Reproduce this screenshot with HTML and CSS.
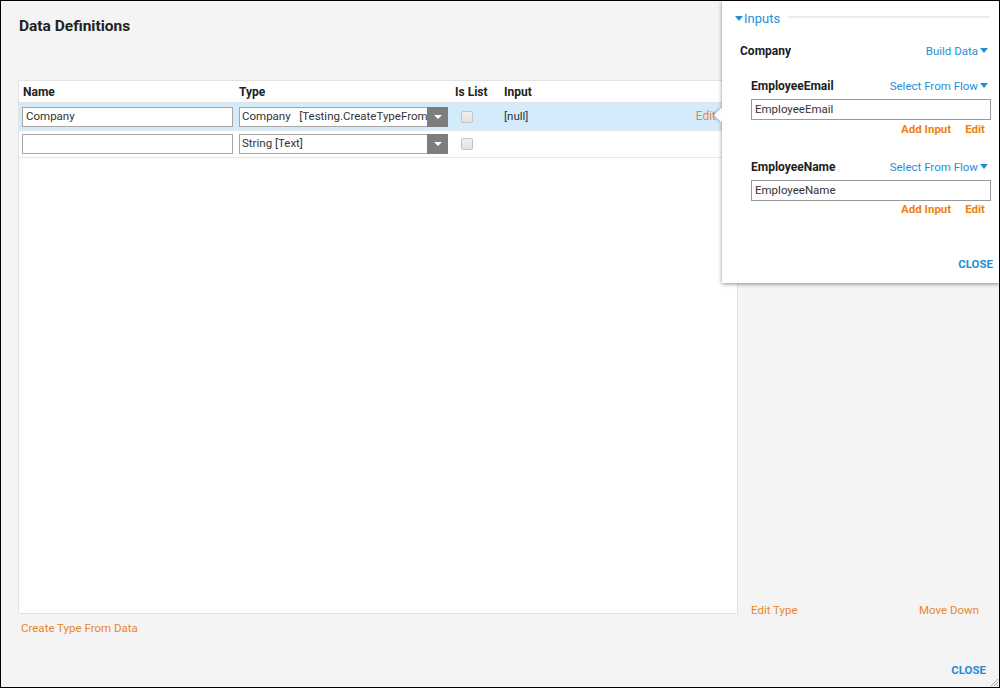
FILE: index.html
```html
<!DOCTYPE html>
<html>
<head>
<meta charset="utf-8">
<link rel="stylesheet" href="styles.css">
</head>
<body>
<div class="frame">
  <div class="content">
    <h1 class="title">Data Definitions</h1>
    <div class="main">
      <div class="table">
        <div class="row head">
          <div class="cell">Name</div>
          <div class="cell">Type</div>
          <div class="cell">Is List</div>
          <div class="cell">Input</div>
          <div class="cell"></div>
        </div>
        <div class="row sel">
          <div class="cell"><div class="tinput">Company</div></div>
          <div class="cell"><div class="select"><span class="sval">Company&nbsp;&nbsp;&nbsp;[Testing.CreateTypeFrom</span><span class="sbtn"><i class="tri-w"></i></span></div></div>
          <div class="cell"><span class="chk"></span></div>
          <div class="cell">[null]</div>
          <div class="cell edit"><span class="link">Edit</span></div>
        </div>
        <div class="row r2">
          <div class="cell"><div class="tinput"></div></div>
          <div class="cell"><div class="select"><span class="sval">String [Text]</span><span class="sbtn"><i class="tri-w"></i></span></div></div>
          <div class="cell"><span class="chk"></span></div>
          <div class="cell"></div>
          <div class="cell"></div>
        </div>
      </div>
      <div class="side">
        <div class="side-actions">
          <span class="link">Edit Type</span>
          <span class="link">Move Down</span>
        </div>
      </div>
    </div>
    <div class="below"><span class="link">Create Type From Data</span></div>
    <div class="footer"><span class="close">CLOSE</span></div>
  </div>

  <div class="popup">
    <div class="arrow"></div>
    <div class="p-head"><i class="tri-b"></i><span class="p-title">Inputs</span><span class="p-line"></span></div>
    <div class="p-company">
      <span class="lbl">Company</span>
      <span class="blue">Build Data<i class="tri-b sm"></i></span>
    </div>
    <div class="p-item">
      <div class="p-row">
        <span class="lbl">EmployeeEmail</span>
        <span class="blue">Select From Flow<i class="tri-b sm"></i></span>
      </div>
      <div class="p-input">EmployeeEmail</div>
      <div class="p-acts"><span class="bold-link">Add Input</span><span class="bold-link">Edit</span></div>
    </div>
    <div class="p-item second">
      <div class="p-row">
        <span class="lbl">EmployeeName</span>
        <span class="blue">Select From Flow<i class="tri-b sm"></i></span>
      </div>
      <div class="p-input">EmployeeName</div>
      <div class="p-acts"><span class="bold-link">Add Input</span><span class="bold-link">Edit</span></div>
    </div>
    <div class="p-foot"><span class="close">CLOSE</span></div>
  </div>

  <svg class="grip" width="10" height="10" viewBox="0 0 10 10">
    <path d="M9 2 L2 9 M9 5 L5 9 M9 8 L8 9" stroke="#a8a8a8" stroke-width="1" fill="none"/>
  </svg>
</div>
</body>
</html>
```

FILE: styles.css
```css
html, body {
  margin: 0;
  padding: 0;
}
body {
  font-family: Roboto, "Liberation Sans", Arial, sans-serif;
  font-size: 11.5px;
  color: #222;
}
.frame {
  position: relative;
  width: 1000px;
  height: 688px;
  box-sizing: border-box;
  border: 1px solid #000;
  background: #f4f4f4;
  overflow: hidden;
}
.content {
  padding: 16px 0 0 17px;
}
.title {
  margin: 0 0 45px 1px;
  font-size: 15.5px;
  line-height: 18px;
  font-weight: 700;
  color: #222;
}
.main {
  display: flex;
  height: 534px;
}
.table {
  width: 720px;
  box-sizing: border-box;
  border: 1px solid #e2e2e2;
  background: #fff;
}
.row {
  display: grid;
  grid-template-columns: 217px 216px 49px 1fr 60px;
  align-items: center;
  border-bottom: 1px solid #e6e6e6;
  height: 27px;
}
.row.head {
  height: 21px;
  font-weight: 700;
  font-size: 12px;
  border-bottom-color: #e2e2e2;
}
.row.head .cell {
  padding-left: 3px;
}
.row.head .cell:first-child {
  padding-left: 4px;
}
.row.sel {
  background: #d4ebfb;
}
.row.r2 {
  height: 26px;
}
.cell {
  padding-left: 3px;
  white-space: nowrap;
  overflow: hidden;
}
.row.sel .cell:nth-child(4) {
  color: #333;
  padding-bottom: 1px;
}
.tinput {
  width: 211px;
  height: 20px;
  box-sizing: border-box;
  border: 1px solid #a6a6a6;
  background: #fff;
  padding: 0 3px;
  line-height: 17px;
  color: #333;
}
.select {
  display: flex;
  width: 209px;
  height: 20px;
  box-sizing: border-box;
  border: 1px solid #a6a6a6;
  background: #fff;
}
.sval {
  flex: 1;
  overflow: hidden;
  white-space: nowrap;
  padding-left: 2px;
  line-height: 17px;
  color: #333;
}
.sbtn {
  width: 21px;
  margin: -1px -1px -1px 0;
  background: #7d7d7d;
  display: flex;
  align-items: center;
  justify-content: center;
}
.tri-w {
  display: block;
  width: 0;
  height: 0;
  border-left: 4px solid transparent;
  border-right: 4px solid transparent;
  border-top: 4px solid #fff;
}
.chk {
  display: block;
  margin-left: 6px;
  width: 12px;
  height: 12px;
  box-sizing: border-box;
  border: 1px solid #c4c4c4;
  border-radius: 2px;
  background: linear-gradient(#f0f0f0, #e2e2e2);
}
.cell.edit {
  text-align: right;
  padding-right: 21px;
  padding-bottom: 1px;
}
.cell.edit .link {
  font-size: 12px;
}
.link {
  color: #e8882b;
}
.side {
  flex: 1;
  display: flex;
  flex-direction: column;
  justify-content: flex-end;
}
.side-actions {
  display: flex;
  justify-content: space-between;
  padding: 0 20px 0 13px;
  line-height: 14px;
  margin-bottom: -3px;
}
.below {
  margin-top: 7px;
  padding-left: 3px;
  line-height: 14px;
}
.footer {
  display: flex;
  justify-content: flex-end;
  padding-right: 13px;
  margin-top: 28px;
  line-height: 14px;
}
.close {
  color: #1f8fd4;
  font-weight: 700;
}

/* popup */
.popup {
  position: absolute;
  left: 721px;
  top: 0;
  width: 277px;
  height: 282px;
  box-sizing: border-box;
  background: #fff;
  box-shadow: 0 1px 4px rgba(0, 0, 0, 0.45);
  padding: 9px 8px 0 13px;
}
.arrow {
  position: absolute;
  left: -6px;
  top: 109px;
  width: 10px;
  height: 10px;
  background: #fff;
  transform: rotate(45deg);
  box-shadow: -1px 1px 2px rgba(0, 0, 0, 0.25);
}
.p-head {
  display: flex;
  align-items: center;
  height: 16px;
  position: relative;
}
.tri-b {
  display: inline-block;
  width: 0;
  height: 0;
  border-left: 4px solid transparent;
  border-right: 4px solid transparent;
  border-top: 5px solid #1f8fd4;
}
.tri-b.sm {
  margin-left: 2px;
  vertical-align: 2px;
}
.p-title {
  color: #1f8fd4;
  font-size: 13px;
  margin-left: 1px;
}
.p-line {
  flex: 1;
  height: 2px;
  background: #ececec;
  margin: 0 2px 0 8px;
  position: relative;
  top: -1px;
}
.lbl {
  font-weight: 700;
  font-size: 12px;
  color: #1d1d1d;
}
.blue {
  color: #1f8fd4;
}
.p-company {
  display: flex;
  justify-content: space-between;
  margin-top: 17px;
  padding: 0 3px 0 5px;
  line-height: 16px;
}
.p-item {
  padding-left: 16px;
  margin-top: 19px;
}
.p-item.second {
  margin-top: 22px;
}
.p-row {
  display: flex;
  justify-content: space-between;
  padding-right: 3px;
  line-height: 16px;
}
.p-input {
  margin-top: 5px;
  height: 21px;
  box-sizing: border-box;
  border: 1px solid #999;
  padding: 0 3px;
  line-height: 19px;
  color: #333;
}
.p-acts {
  display: flex;
  justify-content: flex-end;
  gap: 14px;
  padding-right: 6px;
  margin-top: 1px;
  line-height: 16px;
}
.p-item.second .p-acts {
  margin-top: 0;
}
.bold-link {
  color: #f07f12;
  font-weight: 700;
}
.p-foot {
  display: flex;
  justify-content: flex-end;
  margin-top: 39px;
  line-height: 16px;
}
.p-foot .close {
  margin-right: -2px;
}
.grip {
  position: absolute;
  right: 0;
  bottom: 0;
}
```
